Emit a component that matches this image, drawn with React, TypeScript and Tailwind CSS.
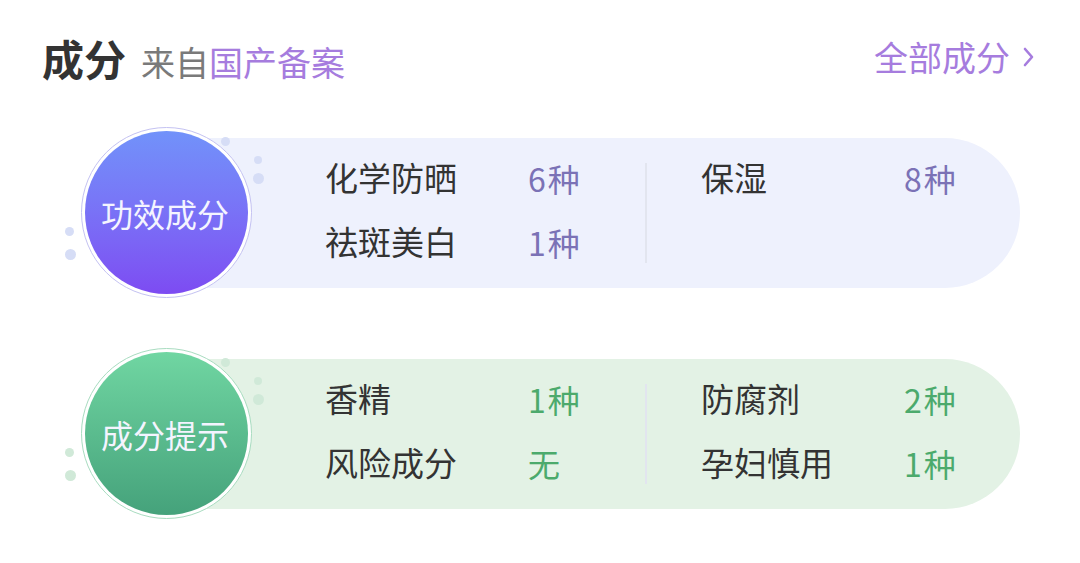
import React from "react";

const font = { fontFamily: '"Noto Sans CJK SC", "Noto Sans", sans-serif' };

type Item = { name: string; count: string };

const Dots = ({ color }: { color: string }) => (
  <>
    <span className={`absolute left-[140px] top-[10px] w-[9px] h-[9px] rounded-full ${color}`} />
    <span className={`absolute left-[173px] top-[29px] w-[8px] h-[8px] rounded-full ${color}`} />
    <span className={`absolute left-[172px] top-[46px] w-[11px] h-[11px] rounded-full ${color}`} />
    <span className={`absolute left-[-16px] top-[100px] w-[9px] h-[9px] rounded-full ${color}`} />
    <span className={`absolute left-[-16px] top-[122px] w-[11px] h-[11px] rounded-full ${color}`} />
  </>
);

const Card = ({
  title,
  green,
  left,
  right,
}: {
  title: string;
  green?: boolean;
  left: Item[];
  right: Item[];
}) => {
  const valueColor = green ? "text-[#4caa6c]" : "text-[#7b72b6]";
  const Cell = ({ item }: { item?: Item }) => (
    <div className="flex items-center h-[64px]">
      <span className="w-[203px] text-[33px] text-[#333]">{item?.name}</span>
      <span className={`text-[32px] tracking-[2px] ${valueColor}`}>{item?.count}</span>
    </div>
  );
  return (
    <div className="relative flex items-center ml-[81px] w-[939px]">
      <Dots color={green ? "bg-[#d0e9d8]" : "bg-[#d6ddf6]"} />
      {/* circle badge */}
      <div
        className={`relative z-10 shrink-0 w-[171px] h-[171px] rounded-full p-[3px] bg-white border ${
          green ? "border-[#a8dcc0]" : "border-[#c4c2f2]"
        }`}
      >
        <div
          className={`w-full h-full rounded-full flex items-center justify-center bg-gradient-to-b ${
            green ? "from-[#70d6a2] to-[#45a27b]" : "from-[#7192fa] to-[#7d4bf2]"
          }`}
        >
          <span className="text-[#f4f4ff] text-[32px] mr-[3px]">{title}</span>
        </div>
      </div>
      {/* panel */}
      <div
        className={`ml-[-85px] flex-1 h-[150px] rounded-r-full flex items-center pl-[158px] ${
          green ? "bg-[#e3f2e5]" : "bg-[#eef1fd]"
        }`}
      >
        <div className="flex flex-col mt-[-6px] w-[320px]">
          {left.map((it) => (
            <Cell key={it.name} item={it} />
          ))}
        </div>
        <div className="w-[2px] h-[100px] bg-[#e2e5ef] mr-[54px]" />
        <div className="flex flex-col mt-[-6px]">
          {[0, 1].map((i) => (
            <Cell key={i} item={right[i]} />
          ))}
        </div>
      </div>
    </div>
  );
};

export default function App() {
  return (
    <div className="w-[1080px] h-[563px] bg-white overflow-hidden" style={font}>
      {/* header */}
      <div className="flex items-end justify-between pl-[42px] pr-[44px] pt-[37px]">
        <div className="flex items-end">
          <span className="text-[42px] font-bold text-[#333] leading-none">成分</span>
          <span className="ml-[15px] text-[34px] leading-none text-[#7a7a7a]">
            来自<span className="text-[#a67cde]">国产备案</span>
          </span>
        </div>
        <div className="flex items-center text-[34px] leading-none text-[#a67cde] mb-[5px]">
          全部成分
          <svg width="14" height="22" viewBox="0 0 14 22" className="ml-[12px]">
            <path d="M3 3 L10 11 L3 19" fill="none" stroke="#a67cde" strokeWidth="2.6" strokeLinecap="round" strokeLinejoin="round" />
          </svg>
        </div>
      </div>

      <div className="flex flex-col gap-[50px] mt-[48px]">
        <Card
          title="功效成分"
          left={[
            { name: "化学防晒", count: "6种" },
            { name: "祛斑美白", count: "1种" },
          ]}
          right={[{ name: "保湿", count: "8种" }]}
        />
        <Card
          title="成分提示"
          green
          left={[
            { name: "香精", count: "1种" },
            { name: "风险成分", count: "无" },
          ]}
          right={[
            { name: "防腐剂", count: "2种" },
            { name: "孕妇慎用", count: "1种" },
          ]}
        />
      </div>
    </div>
  );
}
